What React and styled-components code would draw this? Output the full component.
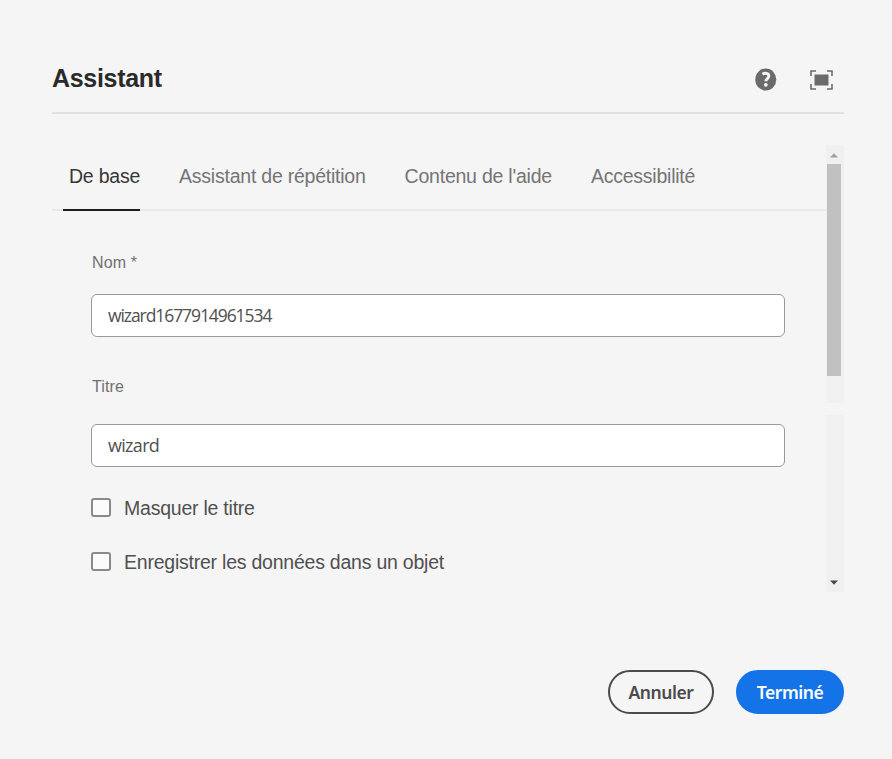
import React from "react";
import styled, { createGlobalStyle } from "styled-components";

const GlobalStyle = createGlobalStyle`
  *, *::before, *::after { box-sizing: border-box; }
  body { margin: 0; background: #f5f5f5; }
`;

const Dialog = styled.main`
  display: flex;
  flex-direction: column;
  width: 892px;
  height: 759px;
  padding: 46px 48px 45px 52px;
  background: #f5f5f5;
  font-family: "Liberation Sans", Arial, sans-serif;
`;

const Header = styled.header`
  display: flex;
  align-items: center;
  justify-content: space-between;
  height: 68px;
  padding: 0 11px 2px 0;
  border-bottom: 2px solid #e0e0e0;
`;

const Title = styled.h1`
  margin: 0;
  font-size: 25px;
  line-height: 30px;
  letter-spacing: -0.3px;
  color: #2a2a2a;
`;

const Actions = styled.div`
  display: flex;
  align-items: center;
  gap: 33px;
  padding-top: 3px;
`;

const IconButton = styled.button`
  display: flex;
  padding: 0;
  border: 0;
  background: none;
  color: #6b6b6b;
`;

const Body = styled.section`
  display: grid;
  grid-template-columns: 774px 18px;
  height: 447px;
  margin-top: 31px;
`;

const Tabs = styled.nav`
  display: flex;
  gap: 39px;
  height: 66px;
  padding-left: 11px;
  border-bottom: 2px solid #e8e8e8;
`;

const Tab = styled.button`
  height: 66px;
  padding: 0 0 3px ${(p) => (p.$active ? "6px" : "0")};
  border: 0;
  border-bottom: 2px solid ${(p) => (p.$active ? "#1c1c1c" : "transparent")};
  background: none;
  font: 19.5px/22px "Liberation Sans", Arial, sans-serif;
  letter-spacing: -0.23px;
  white-space: nowrap;
  color: ${(p) => (p.$active ? "#363636" : "#747474")};
`;

const Form = styled.form`
  display: flex;
  flex-direction: column;
  padding: 42px 41px 0 39px;
`;

const Field = styled.label`
  display: flex;
  flex-direction: column;
  gap: ${(p) => p.$gap}px;
  margin-bottom: ${(p) => p.$after}px;
  font-size: 16px;
  line-height: 20px;
  letter-spacing: 0.1px;
  color: #707070;
`;

const FieldName = styled.span`
  padding-left: 1px;
`;

const Input = styled.input`
  width: 694px;
  height: 43px;
  padding: 0 16px 1px;
  border: 1px solid #999;
  border-radius: 6px;
  background: #fff;
  font: ${(p) => p.$size}px "Open Sans", "Noto Sans", sans-serif;
  letter-spacing: ${(p) => p.$tracking}px;
  color: #505050;
  outline: 0;
`;

const CheckRow = styled.label`
  display: flex;
  align-items: center;
  gap: 13px;
  height: 22px;
  margin-bottom: 32px;
  font-size: 19.5px;
  letter-spacing: -0.23px;
  line-height: 22px;
  color: #505050;
`;

const Checkbox = styled.input`
  appearance: none;
  width: 20px;
  height: 19px;
  margin: 0 0 1px;
  border: 2px solid #8a8a8a;
  border-radius: 3px;
  background: #fbfbfb;
`;

const Scrollbar = styled.div`
  display: flex;
  flex-direction: column;
  gap: 12px;
`;

const Track = styled.div`
  display: flex;
  flex-direction: column;
  align-items: center;
  justify-content: ${(p) => (p.$end ? "flex-end" : "flex-start")};
  height: ${(p) => p.$height}px;
  padding: ${(p) => (p.$end ? "0 2px 7px 0" : "8px 2px 0 0")};
  background: #f0f0f0;
`;

const Arrow = styled.svg`
  display: block;
  flex: none;
`;

const Thumb = styled.div`
  width: 14px;
  height: 212px;
  margin-top: 6px;
  background: #c1c1c1;
`;

const Footer = styled.footer`
  display: flex;
  justify-content: flex-end;
  gap: 22px;
  margin-top: auto;
`;

const PillButton = styled.button`
  width: ${(p) => p.$width}px;
  height: 44px;
  padding: 0 0 1px;
  border: 2px solid ${(p) => (p.$primary ? "#1473e6" : "#4b4b4b")};
  border-radius: 22px;
  background: ${(p) => (p.$primary ? "#1473e6" : "#f5f5f5")};
  font: 600 17.5px "Noto Sans", sans-serif;
  letter-spacing: -0.45px;
  color: ${(p) => (p.$primary ? "#fff" : "#4b4b4b")};
`;

export default function App() {
  return (
    <>
      <GlobalStyle />
      <Dialog>
        <Header>
          <Title>Assistant</Title>
          <Actions>
            <IconButton aria-label="Aide">
              <svg width="22" height="23" viewBox="0 0 22 23">
                <ellipse cx="10.8" cy="11.5" rx="10.5" ry="11.1" fill="currentColor" />
                <path d="M7.5 6.2C9.8 4.7 13.8 5.1 13.8 8c0 2.8-3 2.8-3 5.2" fill="none" stroke="#f5f5f5" strokeWidth="2.9" />
                <circle cx="10.8" cy="16.8" r="1.9" fill="#f5f5f5" />
              </svg>
            </IconButton>
            <IconButton aria-label="Plein écran">
              <svg width="23" height="20" viewBox="0 0 23 20">
                <rect x="4.5" y="4.5" width="14" height="11" fill="currentColor" />
                <path d="M1 6V1h5M17 1h5v5M22 14v5h-5M6 19H1v-5" fill="none" stroke="currentColor" strokeWidth="1.6" />
              </svg>
            </IconButton>
          </Actions>
        </Header>

        <Body>
          <div>
            <Tabs>
              <Tab $active>De base</Tab>
              <Tab>Assistant de répétition</Tab>
              <Tab>Contenu de l'aide</Tab>
              <Tab>Accessibilité</Tab>
            </Tabs>
            <Form>
              <Field $gap={21} $after={40}>
                <FieldName>Nom *</FieldName>
                <Input $size={17.5} $tracking={-1.08} defaultValue="wizard1677914961534" />
              </Field>
              <Field $gap={27} $after={30}>
                <FieldName>Titre</FieldName>
                <Input $size={18} $tracking={-0.7} defaultValue="wizard" />
              </Field>
              <CheckRow>
                <Checkbox type="checkbox" />
                Masquer le titre
              </CheckRow>
              <CheckRow>
                <Checkbox type="checkbox" />
                Enregistrer les données dans un objet
              </CheckRow>
            </Form>
          </div>
          <Scrollbar>
            <Track $height={258}>
              <Arrow width="8" height="5" viewBox="0 0 8 5">
                <path d="M0 4.5 4 .3l4 4.2z" fill="#a0a0a0" />
              </Arrow>
              <Thumb />
            </Track>
            <Track $height={177} $end>
              <Arrow width="8" height="5" viewBox="0 0 8 5">
                <path d="M0 .5 4 4.7 8 .5z" fill="#484848" />
              </Arrow>
            </Track>
          </Scrollbar>
        </Body>

        <Footer>
          <PillButton $width={106}>Annuler</PillButton>
          <PillButton $width={108} $primary>Terminé</PillButton>
        </Footer>
      </Dialog>
    </>
  );
}
